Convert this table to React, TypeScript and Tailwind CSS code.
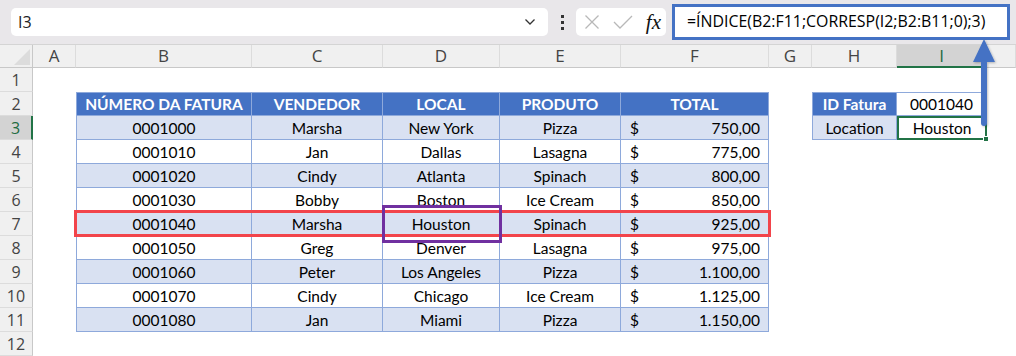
import React from "react";

const rows = [
  ["0001000", "Marsha", "New York", "Pizza", "750,00"],
  ["0001010", "Jan", "Dallas", "Lasagna", "775,00"],
  ["0001020", "Cindy", "Atlanta", "Spinach", "800,00"],
  ["0001030", "Bobby", "Boston", "Ice Cream", "850,00"],
  ["0001040", "Marsha", "Houston", "Spinach", "925,00"],
  ["0001050", "Greg", "Denver", "Lasagna", "975,00"],
  ["0001060", "Peter", "Los Angeles", "Pizza", "1.100,00"],
  ["0001070", "Cindy", "Chicago", "Ice Cream", "1.125,00"],
  ["0001080", "Jan", "Miami", "Pizza", "1.150,00"],
];

const cols = ["A", "B", "C", "D", "E", "F", "G", "H", "I", ""];

const font = { fontFamily: "Lato, 'Noto Sans', sans-serif" };

function RowHead({ n, sel }: { n: number; sel?: boolean }) {
  return (
    <div
      className={
        "h-[24px] flex items-center justify-center text-[16px] border-b border-[#dcdcdc] " +
        (sel
          ? "bg-[#d3d3d3] text-[#1e6b41] border-r-2 border-r-[#217346]"
          : "bg-[#f0f0f0] text-[#444] border-r border-r-[#c8c8c8]")
      }
      style={{ fontFamily: "'Open Sans', sans-serif" }}
    >
      {n}
    </div>
  );
}

function Empty() {
  return <div className="h-[24px] bg-white" />;
}

export default function App() {
  const tcell = "h-[24px] flex items-center justify-center pt-[2px] border-r border-b border-[#8ea9db] text-[15.5px] text-black";
  return (
    <div className="relative w-[1016px] h-[356px] overflow-hidden bg-white" style={font}>
      {/* Top bar */}
      <div className="h-[45px] bg-[#e9e7ea] flex items-center border-b border-[#d4d4d4]">
        <div className="ml-[11px] w-[537px] h-[28px] bg-white rounded-[5px] flex items-center justify-between pl-[7px] pr-[12px] text-[16px] text-[#222]" style={{ fontFamily: "'Open Sans', sans-serif" }}>
          <span>I3</span>
          <svg width="12" height="8" viewBox="0 0 12 8">
            <path d="M1.5 1.5 L6 6 L10.5 1.5" fill="none" stroke="#333" strokeWidth="1.3" />
          </svg>
        </div>
        <div className="w-[28px] flex flex-col items-center gap-[3px]">
          <div className="w-[3px] h-[3px] bg-[#333]" />
          <div className="w-[3px] h-[3px] bg-[#333]" />
          <div className="w-[3px] h-[3px] bg-[#333]" />
        </div>
        <div className="w-[90px] h-[28px] bg-white rounded-[5px] flex items-center justify-between pl-[8px] pr-[5px]">
          <svg width="16" height="16" viewBox="0 0 16 16">
            <path d="M1.5 1.5 L14.5 14.5 M14.5 1.5 L1.5 14.5" stroke="#b8b8b8" strokeWidth="1.3" />
          </svg>
          <svg width="20" height="16" viewBox="0 0 20 16">
            <path d="M1 8 L7 14 L19 2" fill="none" stroke="#b8b8b8" strokeWidth="1.3" />
          </svg>
          <span className="text-[21px] italic text-[#111] leading-none" style={{ fontFamily: "'Liberation Serif', serif" }}>
            fx
          </span>
        </div>
        <div className="ml-[6px] w-[338px] h-[36px] border-[3px] border-[#4472c4] bg-white flex items-center pl-[12px] text-[15.9px] text-black" style={{ fontFamily: "'Open Sans', sans-serif" }}>
          =ÍNDICE(B2:F11;CORRESP(I2;B2:B11;0);3)
        </div>
      </div>

      {/* Grid */}
      <div className="grid grid-cols-[33px_43px_176px_131px_117px_121px_148px_43px_85px_90px_1fr]">
        {/* column header row */}
        <div className="h-[23px] bg-[#f0f0f0] border-b border-r border-[#c8c8c8] relative">
          <div className="absolute right-[2px] bottom-[2px] w-0 h-0 border-l-[16px] border-l-transparent border-b-[16px] border-b-[#dcdcdc]" />
        </div>
        {cols.map((c, i) => (
          <div
            key={i}
            className={
              "h-[23px] flex items-center justify-center text-[17px] border-r border-[#dcdcdc] " +
              (c === "I"
                ? "bg-[#d3d3d3] text-[#1e6b41] border-b-2 border-b-[#217346]"
                : "bg-[#f0f0f0] text-[#444] border-b border-b-[#c8c8c8]")
            }
            style={{ fontFamily: "'Open Sans', sans-serif" }}
          >
            {c}
          </div>
        ))}

        {/* row 1 */}
        <RowHead n={1} />
        {cols.map((_, i) => (
          <Empty key={i} />
        ))}

        {/* row 2 */}
        <RowHead n={2} />
        <Empty />
        {["NÚMERO DA FATURA", "VENDEDOR", "LOCAL", "PRODUTO", "TOTAL"].map((h, i) => (
          <div
            key={h}
            className={
              "h-[24px] flex items-center justify-center pt-[2px] bg-[#4472c4] text-white font-bold text-[15.5px] border-r border-t border-b border-[#8ea9db] " +
              (i === 0 ? "border-l" : "")
            }
          >
            {h}
          </div>
        ))}
        <Empty />
        <div className="h-[24px] flex items-center justify-center pt-[2px] bg-[#4472c4] text-white font-bold text-[15.5px] border border-[#8ea9db]">
          ID Fatura
        </div>
        <div className="h-[24px] flex items-center justify-center pt-[2px] bg-white text-black text-[15.5px] border-r border-t border-b border-[#8ea9db]">
          0001040
        </div>
        <Empty />

        {/* data rows */}
        {rows.map((r, ri) => {
          const band = ri % 2 === 0 ? "bg-[#d9e1f2]" : "bg-white";
          const rowNo = ri + 3;
          return (
            <React.Fragment key={ri}>
              <RowHead n={rowNo} sel={rowNo === 3} />
              <Empty />
              <div className={tcell + " border-l " + band}>{r[0]}</div>
              <div className={tcell + " " + band}>{r[1]}</div>
              <div className={tcell + " " + band}>{r[2]}</div>
              <div className={tcell + " " + band}>{r[3]}</div>
              <div className={tcell + " !justify-between pl-[9px] pr-[8px] " + band}>
                <span>$</span>
                <span>{r[4]}</span>
              </div>
              <Empty />
              {rowNo === 3 ? (
                <>
                  <div className={tcell + " border-l bg-[#d9e1f2]"}>Location</div>
                  <div className="h-[24px] relative flex items-center justify-center pt-[1px] bg-white text-[15.5px] text-black border-2 border-[#217346]">
                    Houston
                    <div className="absolute right-[-4px] bottom-[-4px] w-[6px] h-[6px] bg-[#217346] border border-white" />
                  </div>
                </>
              ) : (
                <>
                  <Empty />
                  <Empty />
                </>
              )}
              <Empty />
            </React.Fragment>
          );
        })}

        {/* row 12 */}
        <RowHead n={12} />
        {cols.map((_, i) => (
          <Empty key={i} />
        ))}
      </div>

      {/* Overlays */}
      <div className="absolute left-[74px] top-[210px] w-[697px] h-[27px] border-[3px] border-[#f2444b] pointer-events-none" />
      <div className="absolute left-[382px] top-[205px] w-[120px] h-[38px] border-[3px] border-[#7030a0] pointer-events-none" />
      <svg className="absolute left-[960px] top-[36px]" width="50" height="96" viewBox="0 0 50 96">
        <defs>
          <filter id="sh" x="-50%" y="-20%" width="200%" height="150%">
            <feDropShadow dx="1" dy="1" stdDeviation="1" floodColor="#000" floodOpacity="0.25" />
          </filter>
        </defs>
        <g filter="url(#sh)">
          <polygon points="13,26 24,3 35,26" fill="#4472c4" />
          <rect x="21" y="24" width="6" height="66" rx="3" fill="#4472c4" />
        </g>
      </svg>
    </div>
  );
}
